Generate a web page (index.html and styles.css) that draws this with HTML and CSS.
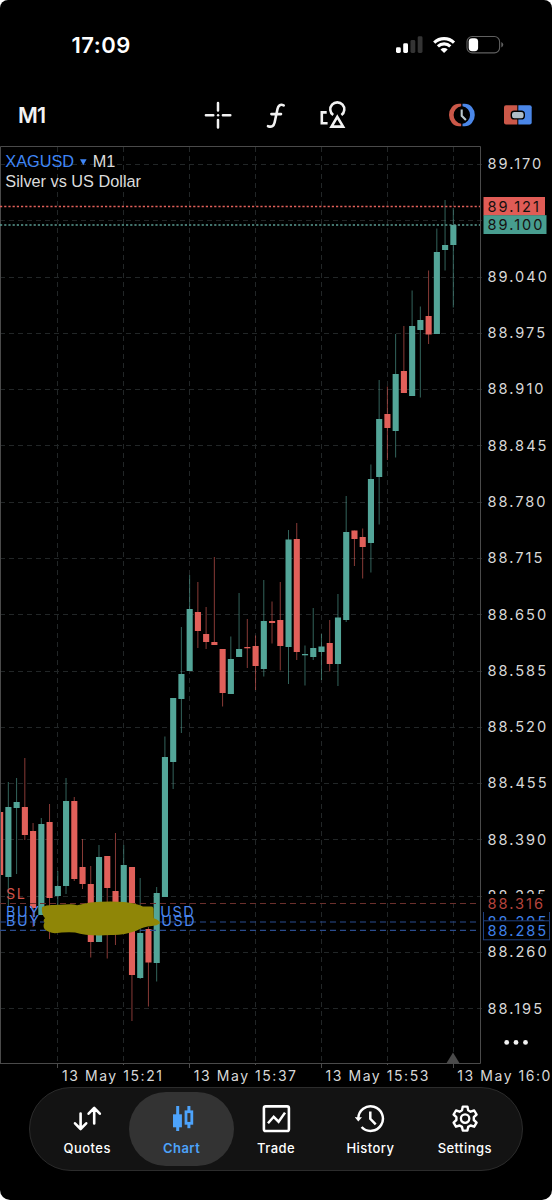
FILE: index.html
```html
<!DOCTYPE html>
<html lang="en">
<head>
    <meta charset="UTF-8">
    <meta name="viewport" content="width=device-width, initial-scale=1.0">
    <title>XAGUSD M1</title>
    <link rel="stylesheet" href="styles.css">
</head>
<body>
    <div class="screen">
        <header class="status-bar">
            <span class="time">17:09</span>
            <svg class="status-icons" width="108" height="20" viewBox="396 35 108 20">
                <g fill="#fff">
                    <rect x="396" y="47.3" width="4.8" height="5.7" rx="1.4" />
                    <rect x="403.2" y="43.3" width="4.8" height="9.7" rx="1.4" />
                </g>
                <g fill="#343434">
                    <rect x="410.5" y="40" width="4.8" height="13" rx="1.4" />
                    <rect x="417.7" y="36.3" width="4.8" height="16.7" rx="1.4" />
                </g>
                <g fill="none" stroke="#fff" stroke-width="3.1">
                    <path d="M434.2 42.6 A14.2 14.2 0 0 1 454 42.6" />
                    <path d="M437.9 46.4 A8.8 8.8 0 0 1 450.3 46.4" />
                </g>
                <path d="M444.1 53 L440.5 49.4 A5.2 5.2 0 0 1 447.7 49.4 Z" fill="#fff" />
                <rect x="467" y="36.5" width="32.6" height="16.4" rx="5.2" fill="none" stroke="#606060" stroke-width="1.1" />
                <rect x="468.7" y="38.2" width="9.4" height="13" rx="3.4" fill="#fff" />
                <path d="M501.3 42 Q503.3 43 503.3 44.7 Q503.3 46.4 501.3 47.4 Z" fill="#606060" />
            </svg>
        </header>

        <div class="toolbar">
            <span class="period">M1</span>
            <div class="tools">
                <svg width="28" height="28" viewBox="0 0 28 28">
                    <path d="M14 2 V9.4 M14 19 V26.4 M1.9 14.2 H9.3 M18.9 14.2 H26.3" stroke="#f2f2f2" stroke-width="2.5" stroke-linecap="round" />
                    <circle cx="14.1" cy="14.2" r="1.2" fill="#f2f2f2" />
                </svg>
                <svg width="20" height="28" viewBox="0 0 20 28">
                    <path d="M17.7 4.4 C14.2 2.8 12.2 4.7 11.5 8 L8.6 21.5 C7.8 25 5.8 26.5 2 25.2 M5.4 13.1 H15" fill="none" stroke="#f2f2f2" stroke-width="2.6" stroke-linecap="round" />
                </svg>
                <svg width="28" height="28" viewBox="0 0 28 28">
                    <g fill="none" stroke="#f2f2f2" stroke-width="2.6">
                        <path d="M6.7 11.4 H1.8 V22.2 H7.6" />
                        <path d="M13.2 14 A7 7 0 1 1 21.4 14" />
                        <path d="M17.3 15.8 L23.1 25.6 H11.5 Z" />
                    </g>
                </svg>
            </div>
            <div class="trade-tools">
                <svg width="28" height="24" viewBox="0 0 28 24">
                    <path d="M13.2 .7 H11 A10 11.3 0 0 0 11 23.3 H13.2 V20.8 A8.9 8.9 0 0 1 13.2 3.2 Z" fill="#cb5849" />
                    <path d="M14.5 .7 H16.8 A10 11.3 0 0 1 16.8 23.3 H14.5 V20.8 A8.9 8.9 0 0 0 14.5 3.2 Z" fill="#4b87e8" />
                    <path d="M13.7 6.6 V12.8 L17.9 17" fill="none" stroke="#b9c8ce" stroke-width="2.1" />
                </svg>
                <svg width="28" height="20" viewBox="0 0 28 20">
                    <path d="M2 .3 H13.3 V19.5 H2 Q0 19.5 0 17.5 V2.3 Q0 .3 2 .3 Z" fill="#cb5849" />
                    <path d="M14.3 .3 H25.7 Q27.7 .3 27.7 2.3 V17.5 Q27.7 19.5 25.7 19.5 H14.3 Z" fill="#4b87e8" />
                    <rect x="7.3" y="6.3" width="13" height="7.6" rx="3" fill="#afbdc7" stroke="#000" stroke-width="1.4" />
                </svg>
            </div>
        </div>

        <svg class="chart" id="chart" width="552" height="941" viewBox="0 146 552 941">
            <g id="grid" class="grid"></g>
            <g id="candles"></g>

            <path class="frame" d="M0.5 1063.5 V146.5 H480.5 V1063.5 H0" />
            <path class="frame" d="M57.5 1063 V1068 M189.5 1063 V1068 M321.5 1063 V1068 M453.5 1063 V1068 M123.5 1063 V1065 M255.5 1063 V1065 M387.5 1063 V1065" />
            <path d="M446 1064 L453 1052.5 L460 1064 Z" fill="#4a4a4a" />

            <path class="ask-line" d="M0 206.5 H480" />
            <path class="bid-line" d="M0 225 H480" />
            <path class="sl-line" d="M0 903.5 H480" />
            <path class="order-line" d="M0 922 H480 M0 930.3 H480" />

            <g class="symbol">
                <text class="name" x="5.3" y="166.5">XAGUSD</text>
                <path d="M80 159.3 H86.6 L83.3 165.3 Z" fill="#3f86f6" />
                <text x="92.8" y="166.5">M1</text>
                <text x="5.3" y="187">Silver vs US Dollar</text>
            </g>

            <g class="order">
                <text class="sl" x="6" y="899">SL</text>
                <text x="6" y="917">BUY</text>
                <text x="6" y="925.7">BUY</text>
                <text x="160.3" y="917">USD</text>
                <text x="161.3" y="925.7">USD</text>
            </g>

            <path class="marker" d="M42 907 Q47 904.5 54 905 L70 904.2 Q74 904 77 905.3 L90 902.5 Q108 900.8 124 902 Q136 903 143 906.5 L151 906.5 Q154 906 153.6 911 L153.8 918.3 Q161 921 159.8 923.5 Q157 925.5 152 926 Q143 926.5 137 930.5 Q123 935.5 111 935 Q88 936.5 75 932.5 Q64 932 55 933.3 Q48 932.5 44.7 929.3 Q42.5 926 44.5 922.5 Q42.5 920.5 45 918.3 Q41 914 42 907 Z" />

            <g id="prices" class="axis"></g>

            <g class="axis">
                <rect x="483.5" y="197" width="61.5" height="18.5" fill="#e05c56" />
                <rect x="483.5" y="215.2" width="63" height="18.8" fill="#479d8f" />
                <text class="dark" x="487.5" y="212">89.121</text>
                <text class="dark" x="487.5" y="230.3">89.100</text>

                <rect x="483" y="894" width="66" height="18" />
                <text class="sl" x="487.5" y="908.8">88.316</text>
                <path class="box" d="M483.5 912 V940 M549.5 912 V940" />
                <text class="blue" x="487.5" y="926.6">88.295</text>
                <rect class="box" x="483.5" y="920.8" width="66" height="19" />
                <text class="blue" x="487.5" y="935.7">88.285</text>
            </g>

            <g fill="#f2f2f2">
                <circle cx="506.7" cy="1042.4" r="2.4" />
                <circle cx="516" cy="1042.4" r="2.4" />
                <circle cx="525.5" cy="1042.4" r="2.4" />
            </g>

            <g class="axis times">
                <text x="62" y="1081.3">13 May 15:21</text>
                <text x="193.8" y="1081.3">13 May 15:37</text>
                <text x="325.5" y="1081.3">13 May 15:53</text>
                <text x="457.3" y="1081.3">13 May 16:09</text>
            </g>
        </svg>

        <nav class="tab-bar">
            <a class="tab">
                <svg width="30" height="30" viewBox="0 0 30 30">
                    <path d="M8.6 9.5 V24.5 M3 19.3 L8.6 25 L14.2 19.3 M22.2 19.5 V4.2 M16.6 9.7 L22.2 3.9 L27.8 9.7" fill="none" stroke="#fff" stroke-width="2.6" stroke-linecap="round" stroke-linejoin="round" />
                </svg>
                <span>Quotes</span>
            </a>
            <a class="tab active">
                <svg width="30" height="30" viewBox="0 0 30 30">
                    <g fill="#4da3fb">
                        <rect x="9.2" y="2" width="3" height="25" />
                        <rect x="6" y="10.3" width="8.9" height="13" />
                        <rect x="20.4" y="2" width="3" height="22.2" />
                        <rect x="17.6" y="6.4" width="8.6" height="14.3" />
                    </g>
                    <rect x="20.4" y="9.1" width="3" height="8.8" fill="#333" />
                </svg>
                <span>Chart</span>
            </a>
            <a class="tab">
                <svg width="30" height="30" viewBox="0 0 30 30">
                    <rect x="2.9" y="2.4" width="25" height="24.6" rx="1.8" fill="none" stroke="#fff" stroke-width="2.6" />
                    <path d="M7 19.3 L12.7 12.8 L17.6 17.7 L24 8.6" fill="none" stroke="#fff" stroke-width="2.5" />
                </svg>
                <span>Trade</span>
            </a>
            <a class="tab">
                <svg width="30" height="30" viewBox="0 0 30 30">
                    <g fill="none" stroke="#fff" stroke-width="2.5">
                        <path d="M3.3 14.6 A12.3 12.3 0 1 1 6.6 23" />
                        <path d="M15.3 7.6 V14.8 L20.7 20.3" />
                    </g>
                    <path d="M-0.2 13.2 H7 L3.3 17.6 Z" fill="#fff" />
                </svg>
                <span>History</span>
            </a>
            <a class="tab">
                <svg width="30" height="30" viewBox="0 0 30 30">
                    <path d="M12.8 2.6 H17.4 L18.2 6.3 L20.6 7.7 L24.2 6.5 L26.6 10.5 L23.8 13.1 V16 L26.6 18.6 L24.2 22.7 L20.6 21.5 L18.2 22.9 L17.4 26.6 H12.8 L12 22.9 L9.6 21.5 L6 22.7 L3.6 18.6 L6.4 16 V13.1 L3.6 10.5 L6 6.5 L9.6 7.7 L12 6.3 Z" fill="none" stroke="#fff" stroke-width="2.4" stroke-linejoin="round" />
                    <circle cx="15.1" cy="14.6" r="4.2" fill="none" stroke="#fff" stroke-width="2.3" />
                </svg>
                <span>Settings</span>
            </a>
        </nav>
    </div>

    <script src="chart.js"></script>
</body>
</html>
```

FILE: styles.css
```css
* {
    padding: 0;
    margin: 0;
    box-sizing: border-box;
}
body {
    background-color: #fff;
    font-family: Inter, "Liberation Sans", sans-serif;
    color: #f2f2f2;
}
.screen {
    width: 552px;
    height: 1200px;
    display: flex;
    flex-direction: column;
    background-color: #000;
    border-radius: 8px 8px 10px 10px;
    overflow: hidden;
}
.status-bar {
    height: 84px;
    padding: 6px 48px 0 71.5px;
    display: flex;
    align-items: center;
    justify-content: space-between;
}
.time {
    font-size: 22px;
    font-weight: 600;
    letter-spacing: 0.5px;
    color: #fff;
}
.status-icons {
    margin-top: -1px;
}
.toolbar {
    height: 62px;
    padding: 0 20px 0 18px;
    display: flex;
    align-items: center;
}
.period {
    width: 186px;
    font-size: 21.5px;
    font-weight: 600;
    letter-spacing: -0.9px;
}
.tools {
    display: flex;
    align-items: center;
    gap: 34px;
}
.trade-tools {
    margin-left: auto;
    display: flex;
    align-items: center;
    gap: 28px;
}
.chart {
    display: block;
    flex: none;
}
.grid path {
    stroke: #222627;
    stroke-width: 1;
    stroke-dasharray: 5 4;
}
.frame {
    fill: none;
    stroke: #4a4a4a;
    stroke-width: 1;
}
.up {
    fill: #53a598;
}
.down {
    fill: #e1605a;
}
.wick {
    opacity: 0.6;
}
.ask-line {
    stroke: #e1605a;
    stroke-width: 1.5;
    stroke-dasharray: 2.2 2;
}
.bid-line {
    stroke: #5a9c92;
    stroke-width: 1.5;
    stroke-dasharray: 2.2 2;
}
.sl-line {
    stroke: #6b2f2c;
    stroke-dasharray: 6 4;
}
.order-line {
    stroke: #2b4d8f;
    stroke-width: 1.2;
    stroke-dasharray: 6 4;
}
.symbol text {
    font-family: "Liberation Sans", sans-serif;
    font-size: 16.3px;
    fill: #dcdcdc;
}
.symbol .name {
    fill: #3f86f6;
}
.order text {
    font-size: 14.3px;
    letter-spacing: 1.6px;
    fill: #4a86ee;
}
.order .sl {
    fill: #cf5148;
}
.marker {
    fill: #8f8607;
}
.axis text {
    font-size: 14.6px;
    letter-spacing: 2px;
    fill: #d8d8d8;
}
.axis .dark {
    fill: #16100f;
}
.axis .sl {
    fill: #b5443d;
}
.axis .blue {
    fill: #3f80ea;
}
.box {
    fill: #000;
    stroke: #1f3f7c;
}
.times text {
    font-size: 14px;
    letter-spacing: 1.55px;
}
.tab-bar {
    width: 494px;
    height: 84px;
    margin: 0 auto 0 29px;
    padding: 4px 10px;
    display: flex;
    background-color: #131313;
    border: 1px solid #2c2c2c;
    border-radius: 42px;
}
.tab {
    flex: 1;
    padding-top: 12px;
    display: flex;
    flex-direction: column;
    align-items: center;
    gap: 6px;
    font-size: 13px;
    font-weight: 500;
    letter-spacing: 0.45px;
    line-height: 17px;
    color: #fff;
}
.active {
    margin: 0 -5.5px;
    flex: 0 0 105.5px;
    background-color: #333;
    border-radius: 37px;
    color: #4da3fb;
    font-weight: 600;
}
```

FILE: chart.js
```js
const SVG_NS = 'http://www.w3.org/2000/svg';
const STEP = 8.24;
const FIRST_X = 0.1;

// direction, high, body top, body bottom, low
const candles = [
    ['down', 812, 812, 875, 875],
    ['up', 782, 807, 877, 907],
    ['up', 778, 802, 808, 874],
    ['down', 758, 807, 835, 840],
    ['down', 823, 831, 908, 927],
    ['up', 818, 824, 915, 915],
    ['down', 804, 822, 898, 939],
    ['up', 871, 886, 896, 905],
    ['up', 778, 801, 886, 894],
    ['down', 797, 801, 879, 881],
    ['down', 839, 867, 884, 889],
    ['down', 866, 884, 942, 957.5],
    ['up', 845, 857, 942, 942],
    ['down', 856, 856, 888, 958.5],
    ['down', 833, 891, 908, 945],
    ['up', 845, 865, 920, 920],
    ['down', 867, 867, 975, 1021],
    ['up', 878, 933, 978, 979],
    ['down', 927, 929, 962.5, 1006.5],
    ['up', 887, 893, 963, 981.5],
    ['up', 736.5, 757, 897, 897],
    ['up', 698, 698, 762, 789],
    ['up', 627, 674, 699, 733],
    ['up', 575, 609, 671, 671],
    ['down', 582, 612, 631, 648],
    ['down', 607, 634, 642, 649],
    ['down', 557, 642, 645, 645],
    ['down', 649, 649, 693, 706.5],
    ['up', 636.5, 659, 694, 694],
    ['up', 593, 649, 657, 657],
    ['down', 619, 647, 648.3, 668],
    ['down', 635.5, 646, 666, 690],
    ['up', 580, 621, 669, 676.5],
    ['down', 601.5, 621, 623, 643.5],
    ['down', 582, 620, 646, 670.5],
    ['up', 530, 539.5, 647, 684],
    ['down', 523, 539, 652, 660],
    ['up', 645.5, 654, 655.3, 685.5],
    ['up', 608, 648, 657, 660],
    ['up', 634, 646.5, 652, 680],
    ['down', 620, 643, 664, 671.5],
    ['up', 594, 617.5, 664, 686],
    ['up', 496, 532, 620, 622],
    ['down', 530.5, 530.5, 539, 566],
    ['down', 528.5, 537, 547, 578.5],
    ['up', 464.5, 479, 543, 572.5],
    ['up', 380, 419, 477, 524.5],
    ['down', 386.5, 414, 428, 460],
    ['up', 334, 374, 431, 457.5],
    ['down', 326, 371, 393, 393],
    ['up', 290.5, 326, 396, 396],
    ['up', 306.5, 320, 330, 397.5],
    ['down', 270.5, 316, 334.5, 344],
    ['up', 228.5, 252, 334, 334],
    ['up', 200, 245, 250, 270.5],
    ['up', 208, 225, 245, 307.5]
];

function add(parent, name, attrs, text) {
    const el = document.createElementNS(SVG_NS, name);
    for (const key in attrs) el.setAttribute(key, attrs[key]);
    if (text) el.textContent = text;
    parent.appendChild(el);
}

const grid = document.getElementById('grid');
const prices = document.getElementById('prices');
const group = document.getElementById('candles');

for (let i = 0; i < 7; i++) {
    add(grid, 'path', { d: `M${57.5 + i * 66} 147 V1063` });
}

for (let i = 0; i < 16; i++) {
    const y = 164 + i * 56.29;
    add(grid, 'path', { d: `M0 ${Math.round(y) + 0.5} H484` });
    // the second level is hidden behind the bid and ask tags
    if (i !== 1) {
        add(prices, 'text', { x: 487.5, y: y + 5.3 }, (89.17 - i * 0.065).toFixed(3));
    }
}

candles.forEach(([dir, high, top, bottom, low], i) => {
    const x = FIRST_X + i * STEP;
    add(group, 'rect', { class: `${dir} wick`, x: x - 0.5, y: high, width: 1, height: low - high });
    add(group, 'rect', { class: dir, x: x - 3, y: top, width: 6.1, height: bottom - top });
});
```
